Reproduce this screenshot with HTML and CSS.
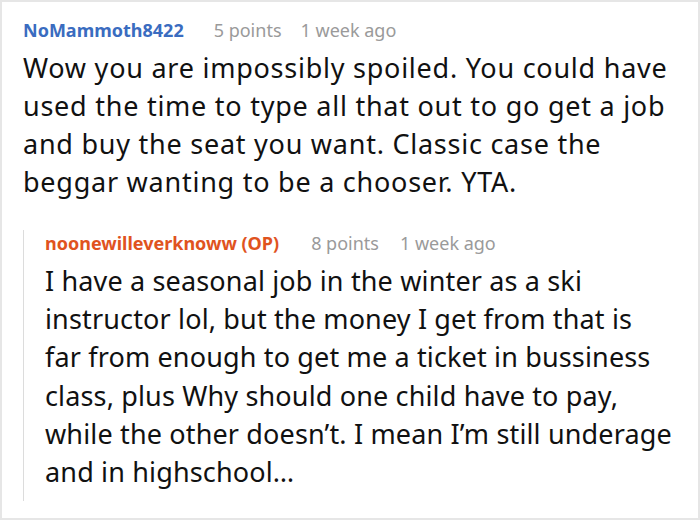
FILE: index.html
```html
<!DOCTYPE html>
<html>
<head>
<meta charset="utf-8">
<link rel="stylesheet" href="styles.css">
</head>
<body>
<div class="frame">
  <div class="comment">
    <div class="meta">
      <span class="user">NoMammoth8422</span>
      <span class="info">5 points</span>
      <span class="info">1 week ago</span>
    </div>
    <p class="text">Wow you are impossibly spoiled. You could have<br>used the time to type all that out to go get a job<br>and buy the seat you want. Classic case the<br>beggar wanting to be a chooser. YTA.</p>
    <div class="reply">
      <div class="meta">
        <span class="user op">noonewilleverknoww (OP)</span>
        <span class="info">8 points</span>
        <span class="info">1 week ago</span>
      </div>
      <p class="text">I have a seasonal job in the winter as a ski<br>instructor lol, but the money I get from that is<br>far from enough to get me a ticket in bussiness<br>class, plus Why should one child have to pay,<br>while the other doesn’t. I mean I’m still underage<br>and in highschool…</p>
    </div>
  </div>
</div>
</body>
</html>
```

FILE: styles.css
```css
html, body {
  margin: 0;
  padding: 0;
  background: #fff;
}
.frame {
  width: 700px;
  height: 520px;
  box-sizing: border-box;
  border: 2px solid #e6e6e6;
  overflow: hidden;
  font-family: "Noto Sans", "Open Sans", sans-serif;
  color: #111;
}
.comment {
  padding: 15px 0 0 21px;
}
.meta {
  display: flex;
  gap: 30px;
  font-size: 18px;
  line-height: 26px;
  white-space: nowrap;
}
.user {
  font-weight: 700;
  color: #3a6cc0;
}
.user.op {
  color: #e0531e;
}
.info {
  color: #9a9a9a;
}
.meta .info + .info {
  margin-left: -11px;
}
.text {
  margin: 6px 0 0 0;
  font-size: 27px;
  letter-spacing: 0.75px;
  line-height: 38px;
  white-space: nowrap;
}
.reply {
  margin-top: 39px;
  border-left: 1px solid #dcdcdc;
  padding: 0 0 10px 21px;
}
.reply .meta {
  margin-top: -10px;
  gap: 32px;
}
.reply .text {
  margin-top: 6px;
  font-size: 27px;
  letter-spacing: 0.15px;
  line-height: 38.2px;
}
```
